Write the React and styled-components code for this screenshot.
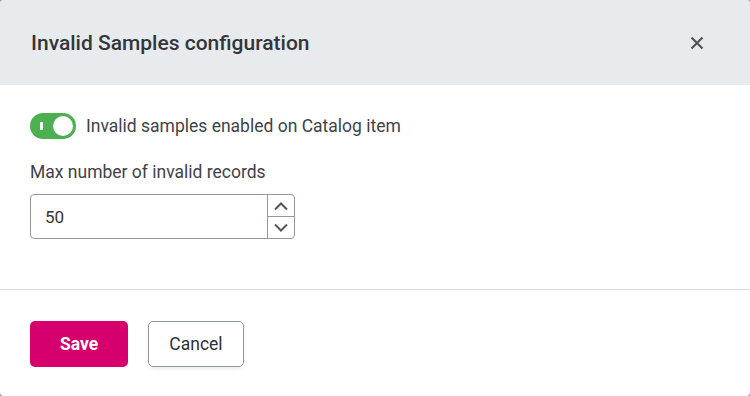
import React, {useState} from 'react';
import styled, {createGlobalStyle} from 'styled-components';

const Global = createGlobalStyle`
  html, body {
    margin: 0;
    padding: 0;
    background: #9a9a9a;
  }
  body {
    font-family: Roboto, "Liberation Sans", sans-serif;
  }
`;

const Dialog = styled.div`
  width: 750px;
  height: 396px;
  background: #fff;
  border-radius: 4px;
  overflow: hidden;
  display: flex;
  flex-direction: column;
`;

const Header = styled.div`
  height: 85px;
  background: #e8ebee;
  display: flex;
  align-items: center;
  justify-content: space-between;
  padding: 0 46px 0 31px;
  box-sizing: border-box;
`;

const Title = styled.h2`
  margin: 0;
  font-size: 21px;
  font-weight: 500;
  color: #33363b;
`;

const CloseButton = styled.button`
  border: none;
  background: none;
  padding: 0;
  width: 14px;
  height: 14px;
  display: flex;
  cursor: pointer;
`;

const Body = styled.div`
  padding: 28px 30px 0;
  height: 205px;
  box-sizing: border-box;
  border-bottom: 1px solid #dcdcdc;
`;

const ToggleRow = styled.label`
  display: flex;
  align-items: center;
  gap: 10px;
  font-size: 17.5px;
  color: #3f4247;
`;

const Track = styled.span`
  position: relative;
  width: 46px;
  height: 26px;
  border-radius: 13px;
  background: ${(p) => (p.on ? '#4caf50' : '#bdbdbd')};
  display: inline-block;
  flex-shrink: 0;
`;

const Knob = styled.span`
  position: absolute;
  top: 3px;
  left: ${(p) => (p.on ? '23px' : '3px')};
  width: 20px;
  height: 20px;
  border-radius: 50%;
  background: #fff;
`;

const OnMark = styled.span`
  position: absolute;
  left: 10px;
  top: 9px;
  width: 3px;
  height: 8px;
  border-radius: 1px;
  background: #fff;
`;

const FieldLabel = styled.div`
  margin-top: 23px;
  font-size: 17.5px;
  color: #3f4247;
`;

const NumberBox = styled.div`
  margin-top: 12px;
  width: 265px;
  height: 45px;
  box-sizing: border-box;
  border: 1px solid #8e9ba6;
  border-radius: 4px;
  display: flex;
`;

const ValueInput = styled.input`
  flex: 1;
  min-width: 0;
  border: none;
  outline: none;
  background: none;
  padding: 0 14px;
  font-family: Roboto, "Liberation Sans", sans-serif;
  font-size: 17px;
  color: #333;
`;

const Spinner = styled.div`
  width: 26px;
  border-left: 1px solid #8e9ba6;
  display: flex;
  flex-direction: column;
`;

const SpinButton = styled.button`
  flex: 1;
  border: none;
  background: none;
  padding: 0;
  display: flex;
  align-items: center;
  justify-content: center;
  & + & {
    border-top: 1px solid #8e9ba6;
  }
`;

const Footer = styled.div`
  display: flex;
  gap: 20px;
  padding: 31px 30px 0;
`;

const Button = styled.button`
  height: 46px;
  border-radius: 5px;
  font-family: Roboto, "Liberation Sans", sans-serif;
  font-size: 17.5px;
  cursor: pointer;
  box-sizing: border-box;
`;

const PrimaryButton = styled(Button)`
  width: 98px;
  background: #d5006d;
  color: #fff;
  border: none;
  font-weight: 700;
`;

const SecondaryButton = styled(Button)`
  width: 96px;
  background: #fff;
  color: #2e3137;
  border: 1px solid #8e9ba6;
  box-shadow: 0 2px 4px rgba(0, 0, 0, 0.08);
`;

const Chevron = ({up}) => (
  <svg width="16" height="10" viewBox="0 0 16 10">
    <path
      d={up ? 'M2 8.5 L8 2.5 L14 8.5' : 'M2 1.5 L8 7.5 L14 1.5'}
      fill="none"
      stroke="#555"
      strokeWidth="2"
    />
  </svg>
);

const App = () => {
  const [on, setOn] = useState(true);
  const [value, setValue] = useState(50);

  return (
    <>
      <Global />
      <Dialog>
        <Header>
          <Title>Invalid Samples configuration</Title>
          <CloseButton aria-label="Close">
            <svg width="14" height="14" viewBox="0 0 14 14">
              <path d="M1.5 1.5 L12.5 12.5 M12.5 1.5 L1.5 12.5" stroke="#555" strokeWidth="2.2" />
            </svg>
          </CloseButton>
        </Header>
        <Body>
          <ToggleRow onClick={() => setOn(!on)}>
            <Track on={on}>
              {on && <OnMark />}
              <Knob on={on} />
            </Track>
            Invalid samples enabled on Catalog item
          </ToggleRow>
          <FieldLabel>Max number of invalid records</FieldLabel>
          <NumberBox>
            <ValueInput value={value} onChange={(e) => setValue(e.target.value)} />
            <Spinner>
              <SpinButton onClick={() => setValue(Number(value) + 1)}>
                <Chevron up />
              </SpinButton>
              <SpinButton onClick={() => setValue(Number(value) - 1)}>
                <Chevron />
              </SpinButton>
            </Spinner>
          </NumberBox>
        </Body>
        <Footer>
          <PrimaryButton>Save</PrimaryButton>
          <SecondaryButton>Cancel</SecondaryButton>
        </Footer>
      </Dialog>
    </>
  );
};

export default App;
